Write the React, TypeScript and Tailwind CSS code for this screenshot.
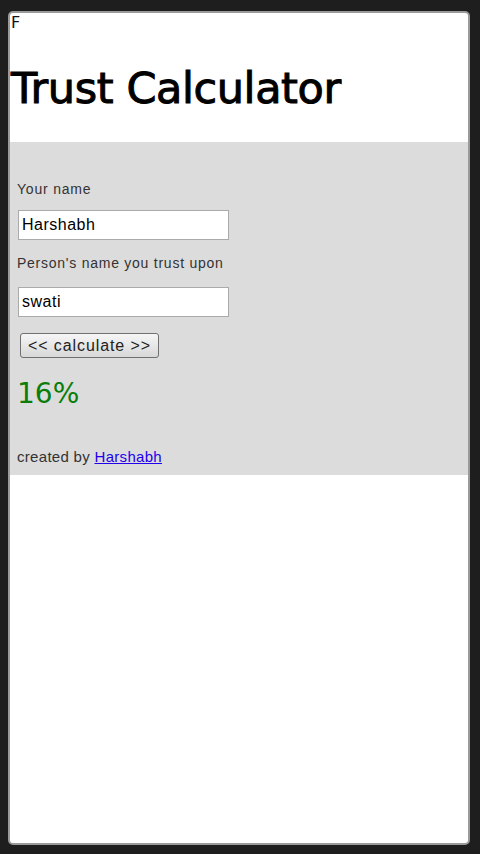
export default function App() {
  return (
    <div className="w-[480px] h-[854px] bg-[#1e1e1e] pt-[11px] pl-[8px] pr-[10px] pb-[9px]" style={{ fontFamily: '"Liberation Sans", Arial, sans-serif' }}>
      <div className="h-full bg-white rounded-[5px] border-2 border-[#9a9a9a] overflow-hidden">
        <div className="text-[16px] leading-[18px] text-[#111] pl-[1px] pt-[1px]" style={{ fontFamily: '"DejaVu Sans", sans-serif' }}>F</div>
        <h1 className="text-[43px] leading-[50px] font-normal text-black mt-[31px] pl-[1px] tracking-[-0.4px] [-webkit-text-stroke:1px_#000]" style={{ fontFamily: '"DejaVu Sans", sans-serif' }}>Trust Calculator</h1>
        <div className="mt-[29px] bg-[#dcdcdc] pt-[38px] pb-[8px] pl-[7px]">
          <div className="text-[14px] leading-[18px] text-[#333] tracking-[0.8px]">Your name</div>
          <input readOnly value="Harshabh" className="mt-[12px] ml-[1px] block w-[211px] h-[30px] bg-white border border-[#aaa] px-[3px] text-[16px] tracking-[0.5px] text-black outline-none" />
          <div className="mt-[14px] text-[14px] leading-[18px] text-[#333] tracking-[0.75px]">Person's name you trust upon</div>
          <input readOnly value="swati" className="mt-[15px] ml-[1px] block w-[211px] h-[30px] bg-white border border-[#aaa] px-[3px] text-[16px] tracking-[0.5px] text-black outline-none" />
          <button className="mt-[16px] ml-[3px] block w-[139px] h-[25px] rounded-[3px] border border-[#707070] bg-gradient-to-b from-[#f6f6f6] to-[#d8d8d8] text-[16px] leading-[20px] tracking-[0.9px] text-[#222]">&lt;&lt; calculate &gt;&gt;</button>
          <div className="mt-[16px] text-[28px] leading-[40px] text-[#0a7d0a]" style={{ fontFamily: '"DejaVu Sans", sans-serif' }}>16%</div>
          <div className="mt-[33px] text-[15px] leading-[20px] text-[#333] tracking-[0.3px]">
            created by <a href="#" className="text-[#2200ee] underline">Harshabh</a>
          </div>
        </div>
      </div>
    </div>
  );
}
